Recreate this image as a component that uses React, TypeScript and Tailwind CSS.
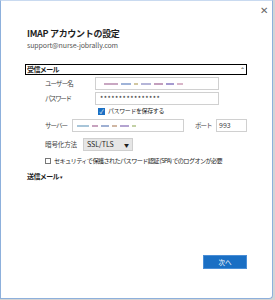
import React from "react";

const jp = { fontFamily: '"Noto Sans CJK JP", "Noto Sans", sans-serif' };

function Blur({ widths }: { widths: [number, string][] }) {
  // 共有しないアドレス部分のモザイク
  return (
    <div className="flex items-center gap-[3px]">
      {widths.map(([w, c], i) => (
        <span key={i} className="h-[2px] inline-block" style={{ width: w, background: c }} />
      ))}
    </div>
  );
}

export default function App() {
  return (
    <div className="w-[275px] h-[300px] bg-[#d4d4d4] text-[#1e1e1e] whitespace-nowrap" style={jp}>
      <div className="w-[273px] h-[299px] bg-white border border-[#8db0dc] border-t-[#c9daf0] rounded-br-[4px] flex flex-col">
        <div className="h-[18px] flex justify-end items-center pr-[4px] text-[10px] leading-none text-[#666]">✕</div>

        <div className="pl-[26px] flex flex-col">
          <div className="mt-[9px] h-[12px] text-[9px] leading-[12px] font-bold tracking-[-0.3px]">IMAP アカウントの設定</div>
          <div className="h-[11px] text-[7px] leading-[11px] text-[#555] tracking-[-0.1px]">support@nurse-jobrally.com</div>

          <div className="mt-[13px] -ml-[2px] w-[222px] h-[11px] border border-black flex items-center justify-between px-px">
            <span className="text-[7px] font-bold leading-none tracking-[-0.6px]">受信メール</span>
            <span className="text-[6px] leading-none">⌃</span>
          </div>

          <div className="ml-[18px] flex flex-col">
            <div className="mt-[2px] flex items-center h-[13px]">
              <span className="w-[50px] text-[6.5px] leading-none text-[#444] tracking-[-0.9px]">ユーザー名</span>
              <div className="w-[124px] h-[13px] border border-[#d0d0d0] flex items-center px-[8px]">
                <Blur widths={[[14, "#c9a7c2"], [10, "#9fb3d8"], [4, "#d2c7a0"], [10, "#b5b5d8"], [9, "#c49fbd"], [8, "#a59ad0"], [6, "#d9b6c9"]]} />
              </div>
            </div>
            <div className="mt-[2px] flex items-center h-[13px]">
              <span className="w-[50px] text-[6.5px] leading-none text-[#444] tracking-[-1.4px]">パスワード</span>
              <div className="w-[124px] h-[13px] border border-[#d0d0d0] flex items-center px-[4px] text-[7px] leading-none tracking-[0.5px]">
                ****************
              </div>
            </div>
            <div className="mt-[2px] ml-[53px] flex items-center gap-[3px] h-[8px]">
              <span className="w-[7px] h-[7px] bg-[#1a6fc4] text-white text-[6px] leading-[7px] text-center">✓</span>
              <span className="text-[6px] leading-none tracking-[-0.4px]">パスワードを保存する</span>
            </div>
            <div className="mt-[4px] flex items-center h-[13px]">
              <span className="w-[27px] text-[6.5px] leading-none text-[#444] tracking-[-1px]">サーバー</span>
              <div className="w-[112px] h-[13px] border border-[#d0d0d0] flex items-center px-[4px]">
                <Blur widths={[[12, "#a8c5d9"], [6, "#c7a3bf"], [8, "#9fb0d3"], [5, "#d0b7a3"], [9, "#b4a4d1"], [4, "#c3d1a6"]]} />
              </div>
              <span className="ml-[11px] w-[21px] text-[6.5px] leading-none text-[#444] tracking-[-1px]">ポート</span>
              <div className="w-[31px] h-[13px] border border-[#d0d0d0] flex items-center px-[2px] text-[7px] leading-none text-[#444]">993</div>
            </div>
            <div className="mt-[5px] flex items-center h-[14px]">
              <span className="w-[38px] text-[6.6px] leading-none text-[#444] tracking-[-0.2px]">暗号化方法</span>
              <div className="w-[50px] h-[13px] bg-[#e6e6e6] border border-[#cfcfcf] flex items-center justify-between px-[3px] text-[7px] leading-none">
                <span>SSL/TLS</span>
                <span className="text-[5px]">▼</span>
              </div>
            </div>
            <div className="mt-[6px] flex items-center gap-[3px] h-[8px]">
              <span className="w-[6px] h-[6px] border border-[#777] bg-white" />
              <span className="text-[6.2px] leading-none tracking-[-0.65px]">セキュリティで保護されたパスワード認証 (SPA) でのログオンが必要</span>
            </div>
          </div>

          <div className="mt-[6px] flex items-center gap-[1px] h-[10px]">
            <span className="text-[7px] font-bold leading-none tracking-[-0.6px]">送信メール</span>
            <span className="text-[5px] leading-none">▾</span>
          </div>
        </div>

        <div className="mt-auto mb-[29px] pr-[25px] flex justify-end">
          <button className="w-[44px] h-[14px] bg-[#1a6fc4] border border-[#4a8ed6] text-white text-[6.5px] leading-none">次へ</button>
        </div>
      </div>
    </div>
  );
}
